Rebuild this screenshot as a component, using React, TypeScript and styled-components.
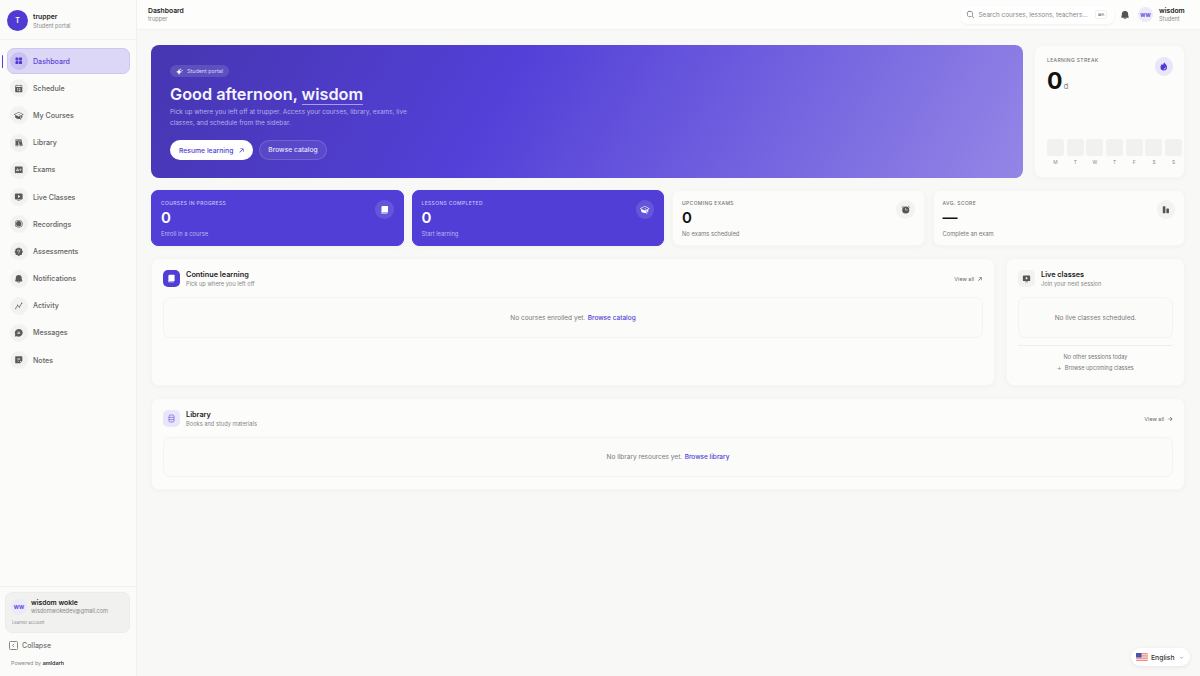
import React from "react";
import styled, { createGlobalStyle } from "styled-components";
import {
  PiSquaresFourFill, PiCalendarFill, PiGraduationCapFill, PiBooksFill, PiExamFill, PiMonitorPlayFill,
  PiRecordFill, PiSealQuestionFill, PiBellFill, PiChatCircleTextFill, PiNoteFill,
  PiSparkleFill, PiArrowUpRightBold, PiArrowRightBold, PiFireFill, PiBookFill, PiAlarmFill,
  PiMagnifyingGlass, PiCaretDownBold, PiPlusBold, PiCaretLeftBold,
} from "react-icons/pi";

const Global = createGlobalStyle`
  html, body { margin: 0; padding: 0; height: 100%; background: #f8f8f7; overflow: hidden; }
  body { font-family: Inter, "Liberation Sans", sans-serif; -webkit-font-smoothing: antialiased; }
  * { box-sizing: border-box; }
`;

const Shell = styled.div`display: flex; height: 676px; width: 1200px; position: relative;`;
const Sidebar = styled.aside`
  width: 137px; flex: none; display: flex; flex-direction: column; background: #fbfbfa;
  border-right: 1px solid #f0f0ef; position: relative;
`;
const Brand = styled.div`
  height: 40px; padding: 10px 7px 0; display: flex; gap: 5px; border-bottom: 1px solid #f2f2f1;
`;
const BrandMark = styled.div`
  width: 21px; height: 21px; border-radius: 50%; background: #4f3bd3; color: #fff; font-size: 7px; font-weight: 600;
  display: flex; align-items: center; justify-content: center;
`;
const BrandText = styled.div`display: flex; flex-direction: column; gap: 1.5px; padding-top: 2px;`;
const BrandName = styled.div`font-size: 6.8px; line-height: 9px; font-weight: 600; color: #222;`;
const BrandSub = styled.div`font-size: 5.6px; line-height: 7px; color: #8a8a8a;`;
const Nav = styled.nav`flex: 1; padding: 8px 6px 0 7px; display: flex; flex-direction: column; gap: 1px;`;
const NavItem = styled.div<{ $active?: boolean }>`
  height: 26.2px; border-radius: 7px; display: flex; align-items: center; gap: 5px; padding-left: 2px; position: relative;
  font-size: 7.1px; font-weight: 500;
  color: ${(p) => (p.$active ? "#5b45d6" : "#636363")};
  background: ${(p) => (p.$active ? "#dcd7f6" : "transparent")};
  border: 1px solid ${(p) => (p.$active ? "#cdc7f0" : "transparent")};
  &::before {
    content: ""; display: ${(p) => (p.$active ? "block" : "none")}; position: absolute; left: -6.5px; top: 5.5px;
    width: 1.6px; height: 13px; border-radius: 1px; background: #5340d6;
  }
`;
const NavIcon = styled.span<{ $active?: boolean }>`
  width: 18px; height: 18px; border-radius: 50%; display: flex; align-items: center; justify-content: center; font-size: 9.5px;
  background: ${(p) => (p.$active ? "#c9c2f1" : "#f2f2f1")};
  color: ${(p) => (p.$active ? "#4f3bd3" : "#5a5a5a")};
`;
const SideFoot = styled.div`border-top: 1px solid #f0f0ef; padding: 5px 6px 0 5px; height: 90px;`;
const UserCard = styled.div`
  height: 41px; border-radius: 7px; background: #f1f1f0; border: 1px solid #ececeb; padding: 5px 5px;
  display: flex; flex-direction: column;
`;
const UserRow = styled.div`display: flex; gap: 4px; align-items: center;`;
const UserAvatar = styled.div<{ $size?: number }>`
  width: ${(p) => p.$size ?? 16}px; height: ${(p) => p.$size ?? 16}px; border-radius: 50%; background: #ece9fb; color: #5b45d6;
  font-size: 5px; font-weight: 700; display: flex; align-items: center; justify-content: center; flex: none;
`;
const UserName = styled.div`font-size: 6.8px; line-height: 9px; font-weight: 600; color: #222;`;
const UserMail = styled.div`font-size: 5.6px; line-height: 8px; color: #8a8a8a;`;
const UserTag = styled.div`font-size: 4.2px; color: #8a8a8a; margin-top: 5px; margin-left: 1px;`;
const Collapse = styled.div`display: flex; align-items: center; gap: 4px; padding: 8px 4px 0; font-size: 7px; color: #707070; font-weight: 500;`;
const CollapseBox = styled.span`
  width: 9px; height: 9px; border: 1px solid #888; border-radius: 1.5px; display: flex; align-items: center; justify-content: center; font-size: 5px; color: #666;
`;
const Powered = styled.div`font-size: 5.4px; color: #888; padding: 10px 6px 0; b { color: #333; font-weight: 600; }`;

const Main = styled.main`flex: 1; min-width: 0; display: flex; flex-direction: column;`;
const Topbar = styled.header`
  height: 30px; flex: none; background: #fdfdfc; border-bottom: 1px solid #f2f2f1; display: flex; align-items: center; padding: 0 16px 0 11px;
`;
const TopTitle = styled.div`flex: 1; display: flex; flex-direction: column; gap: 1px;`;
const TopName = styled.div`font-size: 6.8px; line-height: 9px; font-weight: 600; color: #222;`;
const TopSub = styled.div`font-size: 5.6px; line-height: 7px; color: #8a8a8a;`;
const Search = styled.div`
  width: 153px; height: 18px; border-radius: 7px; background: #fff; box-shadow: 0 1px 3px rgba(0,0,0,.05); display: flex; align-items: center;
  padding: 0 7px 0 5px; gap: 3.5px; font-size: 6.4px; color: #888; margin-right: 6px;
`;
const SearchText = styled.span`flex: 1; white-space: nowrap;`;
const Kbd = styled.span`
  width: 12px; height: 9px; border-radius: 2px; border: 1px solid #f0f0f0; font-size: 4px; color: #666; display: flex; align-items: center; justify-content: center;
`;
const TopBell = styled.span`font-size: 10px; color: #555; display: flex; margin: 0 8px 0 0;`;
const TopUser = styled.div`display: flex; flex-direction: column; gap: 1px; margin-left: 6px; width: 25px;`;

const Content = styled.div`padding: 15px 15px 0 14px; display: flex; flex-direction: column; gap: 12px;`;
const HeroRow = styled.div`display: grid; grid-template-columns: 1fr 151px; grid-template-rows: 133px; gap: 11px;`;
const Hero = styled.section`
  border-radius: 8px; padding: 20px 19px 0; color: #fff;
  background: linear-gradient(120deg, #4636b0 0%, #5340d8 40%, #7565e0 72%, #9486e6 100%);
`;
const HeroPill = styled.div`
  display: flex; width: fit-content; align-items: center; gap: 4px; height: 12px; border-radius: 6px; padding: 0 6px; background: rgba(255,255,255,.12);
  font-size: 5.4px; color: #d9d4f6;
`;
const HeroTitle = styled.h1`
  margin: 7px 0 0; font-size: 16.3px; line-height: 20px; font-weight: 600; letter-spacing: -0.02px; color: #f5f3ff;
  span { border-bottom: 1px solid #a99ff0; }
`;
const HeroText = styled.p`margin: 2.5px 0 0; width: 245px; font-size: 6.45px; line-height: 11px; color: #b5acec;`;
const HeroActions = styled.div`display: flex; gap: 6px; margin-top: 11.5px;`;
const PrimaryBtn = styled.div`
  height: 20px; width: 83px; border-radius: 10px; background: #fff; color: #4f3dd0; font-size: 6.8px; font-weight: 500; display: flex; align-items: center; padding-left: 9px; gap: 5px;
`;
const GhostBtn = styled.div`
  height: 20px; width: 68px; border-radius: 10px; background: rgba(255,255,255,.07); border: 1px solid rgba(255,255,255,.15); color: #e7e3fb; font-size: 6.7px; font-weight: 500; display: flex; align-items: center; justify-content: center;
`;
const Card = styled.section`
  background: #fcfcfb; border-radius: 8px; box-shadow: 0 1px 4px rgba(0,0,0,.035); border: 1px solid #f6f6f5;
`;
const Streak = styled(Card)`padding: 11px 3px 0 12px; display: flex; flex-direction: column;`;
const StreakTop = styled.div`display: flex; justify-content: space-between; height: 82px; padding-right: 8px;`;
const Eyebrow = styled.div<{ $light?: boolean }>`
  font-size: 5px; line-height: 7px; letter-spacing: .35px; text-transform: uppercase; font-weight: 500;
  color: ${(p) => (p.$light ? "#c7c0f3" : "#777")};
`;
const BigNumber = styled.div`font-size: 23px; line-height: 24px; font-weight: 700; color: #111; margin-top: 5px; small { font-size: 8px; font-weight: 400; color: #888; margin-left: 1px; }`;
const CircleIcon = styled.span<{ $tone: "light" | "violet" | "glass" }>`
  flex: none; width: 18.5px; height: 18.5px; border-radius: 50%; display: flex; align-items: center; justify-content: center; font-size: 9.5px;
  background: ${(p) => (p.$tone === "glass" ? "rgba(255,255,255,.12)" : p.$tone === "violet" ? "#e9e6fa" : "#f3f3f2")};
  color: ${(p) => (p.$tone === "glass" ? "#fff" : p.$tone === "violet" ? "#4f3bd3" : "#555")};
`;
const Days = styled.div`display: grid; grid-template-columns: repeat(7, 17px); column-gap: 2.7px;`;
const DayBox = styled.div`height: 17px; border-radius: 3px; background: #f1f1f0;`;
const DayLabel = styled.div`font-size: 4.8px; line-height: 7px; color: #888; text-align: center; margin-top: 3px;`;
const Day = styled.div``;
const Stats = styled.div`display: grid; grid-template-columns: repeat(4, 1fr); gap: 8px; height: 56px;`;
const Stat = styled.div<{ $primary?: boolean }>`
  border-radius: 7px; padding: 9px 9px 0; display: flex; justify-content: space-between;
  background: ${(p) => (p.$primary ? "#503ed6" : "#fcfcfb")};
  border: 1px solid ${(p) => (p.$primary ? "#503ed6" : "#f6f6f5")};
  box-shadow: 0 1px 4px rgba(0,0,0,.035);
  color: ${(p) => (p.$primary ? "#fff" : "#111")};
`;
const StatNum = styled.div`font-size: 15px; line-height: 18px; font-weight: 600; margin-top: 2px;`;
const StatHint = styled.div<{ $light?: boolean }>`font-size: 5.8px; line-height: 8px; margin-top: 3px; color: ${(p) => (p.$light ? "#bdb5f0" : "#777")};`;
const Split = styled.div`display: grid; grid-template-columns: 1fr 179px; gap: 11px; height: 128px;`;
const Panel = styled(Card)`padding: 10px 11px 0 11px;`;
const PanelHead = styled.div`display: flex; align-items: center; gap: 5px; height: 18px; margin-bottom: 10px;`;
const SquareIcon = styled.span<{ $tone: "solid" | "soft" | "grey" }>`
  flex: none; width: 17px; height: 17px; border-radius: 5px; display: flex; align-items: center; justify-content: center; font-size: 9px;
  background: ${(p) => (p.$tone === "solid" ? "#503ed6" : p.$tone === "soft" ? "#e9e6fa" : "#f2f2f1")};
  color: ${(p) => (p.$tone === "solid" ? "#fff" : p.$tone === "soft" ? "#6a57d8" : "#555")};
  margin-right: 1px;
`;
const PanelTitles = styled.div`flex: 1; display: flex; flex-direction: column;`;
const PanelTitle = styled.div`font-size: 7.3px; line-height: 11px; font-weight: 600; color: #1b1b1b;`;
const PanelSub = styled.div`font-size: 5.7px; line-height: 8px; color: #888;`;
const ViewAll = styled.div`font-size: 5.4px; color: #666; display: flex; align-items: center; gap: 3px; margin-top: 1px; svg { font-size: 6px; }`;
const Empty = styled.div<{ $h: number }>`
  height: ${(p) => p.$h}px; border: 1px solid #f3f3f2; border-radius: 7px; background: #fbfbfa; display: flex; align-items: center; justify-content: center;
  font-size: 6.5px; color: #777; gap: 2.5px;
  a { color: #503ed6; font-weight: 500; }
`;
const LiveFoot = styled.div`
  margin-top: 7px; padding-top: 8px; border-top: 1px solid #eeeeed; display: flex; flex-direction: column; align-items: center; gap: 5px; font-size: 5.6px; color: #777;
`;
const LiveLink = styled.div`display: flex; align-items: center; gap: 3px; svg { font-size: 4.5px; }`;
const LibraryPanel = styled(Panel)`height: 92px;`;
const Lang = styled.div`
  position: absolute; right: 10px; bottom: 10px; height: 18px; width: 59px; border-radius: 9px; background: #fff; box-shadow: 0 1px 4px rgba(0,0,0,.08);
  display: flex; align-items: center; gap: 3px; padding-left: 5px; font-size: 6.8px; font-weight: 500; color: #333;
  svg.caret { font-size: 5px; color: #888; margin-left: 1px; }
`;

const ActivityIcon = () => (
  <svg width="1em" height="1em" viewBox="0 0 16 16" fill="none" stroke="currentColor" strokeWidth="1.3" strokeLinecap="round">
    <path d="M3 12 L6 7.5 L9 10 L13 4" />
    <circle cx="3" cy="13" r=".9" fill="currentColor" stroke="none" />
    <circle cx="6" cy="7" r=".9" fill="currentColor" stroke="none" />
    <circle cx="9" cy="10.4" r=".9" fill="currentColor" stroke="none" />
    <circle cx="13" cy="3.6" r=".9" fill="currentColor" stroke="none" />
  </svg>
);
const ScoreIcon = () => (
  <svg width="1em" height="1em" viewBox="0 0 16 16" fill="currentColor">
    <rect x="3" y="2" width="4.4" height="12" rx=".8" />
    <rect x="9" y="6" width="4.4" height="8" rx=".8" />
  </svg>
);
const ShelfIcon = () => (
  <svg width="1em" height="1em" viewBox="0 0 16 16" fill="none" stroke="currentColor" strokeWidth="1.2">
    <rect x="3.5" y="1.8" width="9" height="12.4" rx="2.4" />
    <path d="M3.5 6 H12.5 M3.5 10 H12.5" />
  </svg>
);

const nav: [string, React.ComponentType][] = [
  ["Dashboard", PiSquaresFourFill], ["Schedule", PiCalendarFill], ["My Courses", PiGraduationCapFill], ["Library", PiBooksFill],
  ["Exams", PiExamFill], ["Live Classes", PiMonitorPlayFill], ["Recordings", PiRecordFill], ["Assessments", PiSealQuestionFill],
  ["Notifications", PiBellFill], ["Activity", ActivityIcon], ["Messages", PiChatCircleTextFill], ["Notes", PiNoteFill],
];
const stats = [
  { label: "Courses in progress", value: "0", hint: "Enroll in a course", primary: true, Icon: PiBookFill },
  { label: "Lessons completed", value: "0", hint: "Start learning", primary: true, Icon: PiGraduationCapFill },
  { label: "Upcoming exams", value: "0", hint: "No exams scheduled", primary: false, Icon: PiAlarmFill },
  { label: "Avg. score", value: "—", hint: "Complete an exam", primary: false, Icon: ScoreIcon },
];

const Flag = () => (
  <svg width="12" height="8" viewBox="0 0 13 8" preserveAspectRatio="none">
    <rect width="13" height="8" rx="1" fill="#ee8f8f" />
    <rect y="1.2" width="13" height="1.1" fill="#fff" opacity=".7" />
    <rect y="3.5" width="13" height="1.1" fill="#fff" opacity=".7" />
    <rect y="5.8" width="13" height="1.1" fill="#fff" opacity=".7" />
    <rect width="6" height="4.4" rx=".6" fill="#4a55a8" />
  </svg>
);

export default function App() {
  return (
    <Shell>
      <Global />
      <Sidebar>
        <Brand>
          <BrandMark>T</BrandMark>
          <BrandText><BrandName>trupper</BrandName><BrandSub>Student portal</BrandSub></BrandText>
        </Brand>
        <Nav>
          {nav.map(([label, Icon], i) => (
            <NavItem key={label} $active={i === 0}>
              <NavIcon $active={i === 0}><Icon /></NavIcon>{label}
            </NavItem>
          ))}
        </Nav>
        <SideFoot>
          <UserCard>
            <UserRow>
              <UserAvatar>WW</UserAvatar>
              <div><UserName>wisdom wokle</UserName><UserMail>wisdomwokedev@gmail.com</UserMail></div>
            </UserRow>
            <UserTag>Learner account</UserTag>
          </UserCard>
          <Collapse><CollapseBox><PiCaretLeftBold /></CollapseBox>Collapse</Collapse>
          <Powered>Powered by <b>amldarh</b></Powered>
        </SideFoot>
      </Sidebar>
      <Main>
        <Topbar>
          <TopTitle><TopName>Dashboard</TopName><TopSub>trupper</TopSub></TopTitle>
          <Search><PiMagnifyingGlass size={9} color="#555" /><SearchText>Search courses, lessons, teachers...</SearchText><Kbd>⌘K</Kbd></Search>
          <TopBell><PiBellFill /></TopBell>
          <UserAvatar $size={15}>WW</UserAvatar>
          <TopUser><TopName>wisdom</TopName><TopSub>Student</TopSub></TopUser>
        </Topbar>
        <Content>
          <HeroRow>
            <Hero>
              <HeroPill><PiSparkleFill size={7} color="#fff" />Student portal</HeroPill>
              <HeroTitle>Good afternoon, <span>wisdom</span></HeroTitle>
              <HeroText>Pick up where you left off at trupper. Access your courses, library, exams, live classes, and schedule from the sidebar.</HeroText>
              <HeroActions>
                <PrimaryBtn>Resume learning <PiArrowUpRightBold size={7} /></PrimaryBtn>
                <GhostBtn>Browse catalog</GhostBtn>
              </HeroActions>
            </Hero>
            <Streak>
              <StreakTop>
                <div><Eyebrow>Learning streak</Eyebrow><BigNumber>0<small>d</small></BigNumber></div>
                <CircleIcon $tone="violet"><PiFireFill /></CircleIcon>
              </StreakTop>
              <Days>
                {["M", "T", "W", "T", "F", "S", "S"].map((d, i) => (
                  <Day key={i}><DayBox /><DayLabel>{d}</DayLabel></Day>
                ))}
              </Days>
            </Streak>
          </HeroRow>
          <Stats>
            {stats.map(({ label, value, hint, primary, Icon }) => (
              <Stat key={label} $primary={primary}>
                <div>
                  <Eyebrow $light={primary}>{label}</Eyebrow>
                  <StatNum>{value}</StatNum>
                  <StatHint $light={primary}>{hint}</StatHint>
                </div>
                <CircleIcon $tone={primary ? "glass" : "light"}><Icon /></CircleIcon>
              </Stat>
            ))}
          </Stats>
          <Split>
            <Panel>
              <PanelHead>
                <SquareIcon $tone="solid"><PiBookFill /></SquareIcon>
                <PanelTitles><PanelTitle>Continue learning</PanelTitle><PanelSub>Pick up where you left off</PanelSub></PanelTitles>
                <ViewAll>View all <PiArrowUpRightBold /></ViewAll>
              </PanelHead>
              <Empty $h={41}>No courses enrolled yet. <a>Browse catalog</a></Empty>
            </Panel>
            <Panel>
              <PanelHead>
                <SquareIcon $tone="grey"><PiMonitorPlayFill /></SquareIcon>
                <PanelTitles><PanelTitle>Live classes</PanelTitle><PanelSub>Join your next session</PanelSub></PanelTitles>
              </PanelHead>
              <Empty $h={41}>No live classes scheduled.</Empty>
              <LiveFoot>
                <span>No other sessions today</span>
                <LiveLink><PiPlusBold />Browse upcoming classes</LiveLink>
              </LiveFoot>
            </Panel>
          </Split>
          <LibraryPanel>
            <PanelHead>
              <SquareIcon $tone="soft"><ShelfIcon /></SquareIcon>
              <PanelTitles><PanelTitle>Library</PanelTitle><PanelSub>Books and study materials</PanelSub></PanelTitles>
              <ViewAll>View all <PiArrowRightBold /></ViewAll>
            </PanelHead>
            <Empty $h={40}>No library resources yet. <a>Browse library</a></Empty>
          </LibraryPanel>
        </Content>
      </Main>
      <Lang><Flag />English<PiCaretDownBold className="caret" /></Lang>
    </Shell>
  );
}
